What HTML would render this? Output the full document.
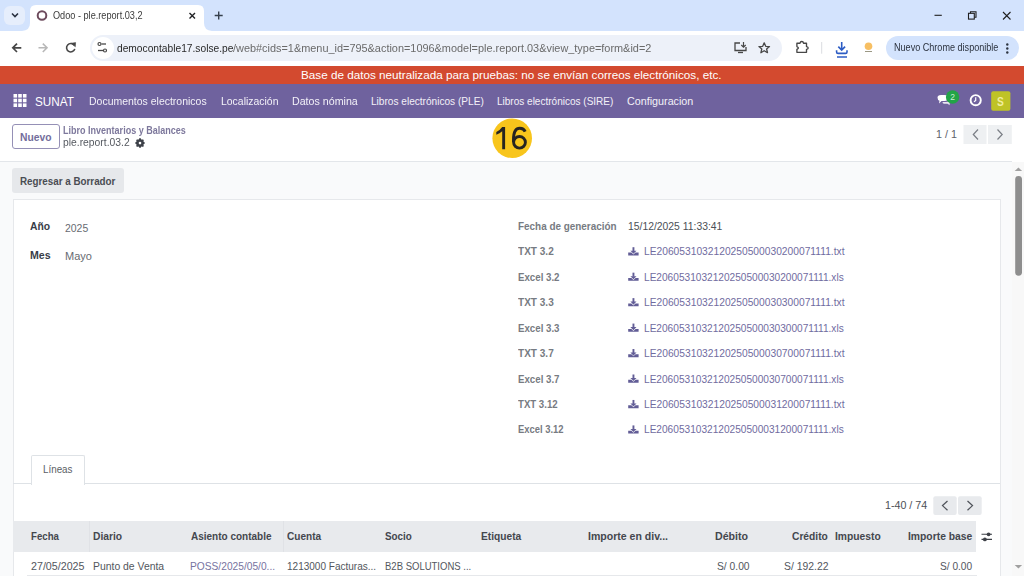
<!DOCTYPE html>
<html><head><meta charset="utf-8">
<style>
*{box-sizing:border-box;margin:0;padding:0}
html,body{width:1024px;height:576px;overflow:hidden;background:#fff;font-family:"Liberation Sans",sans-serif;position:relative}
.b{position:absolute}
.tx{position:absolute;white-space:nowrap;line-height:1}
svg{position:absolute;overflow:visible}
#wrap{position:absolute;left:0;top:0;width:1024px;height:576px;filter:blur(0.35px)}
</style></head><body><div id="wrap">
<!-- chrome tab bar -->
<div class="b" style="left:0;top:0;width:1024px;height:30.5px;background:#d3e3fd"></div>
<div class="b" style="left:4px;top:6px;width:21px;height:19px;border-radius:6px;background:#e6eefc"></div>
<svg style="left:0;top:0" width="1024" height="31">
  <path d="M12 13.5 L15 16.5 L18 13.5" fill="none" stroke="#2a3140" stroke-width="1.6"/>
  <!-- tab shape -->
  <path d="M22 31 Q30 30.5 30 23 L30 11 Q30 5 36 5 L198 5 Q204 5 204 11 L204 23 Q204 30.5 212 31 Z" fill="#fff"/>
  <circle cx="42" cy="15.5" r="4.3" fill="none" stroke="#6d4b5d" stroke-width="2"/>
  <path d="M189.5 13 L195 18.5 M195 13 L189.5 18.5" stroke="#202124" stroke-width="1.4"/>
  <path d="M218.7 11.5 V19.5 M214.7 15.5 H222.7" stroke="#36404d" stroke-width="1.4"/>
  <path d="M934.5 15.3 H941.8" stroke="#1f1f1f" stroke-width="1.1"/>
  <rect x="968.5" y="13.3" width="5.8" height="5.8" fill="none" stroke="#1f1f1f" stroke-width="1.1"/>
  <path d="M970.5 13.3 V11.8 H976 V17.2 H974.3" fill="none" stroke="#1f1f1f" stroke-width="1.1"/>
  <path d="M1003 12 L1010.5 19.5 M1010.5 12 L1003 19.5" stroke="#1f1f1f" stroke-width="1.1"/>
</svg>
<!-- toolbar -->
<div class="b" style="left:0;top:30.5px;width:1024px;height:35.5px;background:#fff;border-top-right-radius:4px"></div>
<div class="b" style="left:90px;top:35px;width:692px;height:25.5px;border-radius:13px;background:#edf1f9"></div>
<div class="b" style="left:91.5px;top:36.5px;width:22.5px;height:22.5px;border-radius:50%;background:#fff"></div>
<div class="b" style="left:885.5px;top:35.5px;width:133.5px;height:24.5px;border-radius:12.5px;background:#d3e3fd"></div>
<svg style="left:0;top:0" width="1024" height="66">
  <!-- back -->
  <path d="M21.3 47.8 H13 M17 43.6 L12.8 47.8 L17 52" fill="none" stroke="#474747" stroke-width="1.7"/>
  <!-- forward -->
  <path d="M38.5 47.8 H46.8 M42.8 43.6 L47 47.8 L42.8 52" fill="none" stroke="#b8b8b8" stroke-width="1.6"/>
  <!-- reload -->
  <path d="M74.2 45.3 A4.2 4.2 0 1 0 74.8 48.9" fill="none" stroke="#474747" stroke-width="1.6"/>
  <path d="M71.6 43.2 L75.6 42.6 L75.3 46.8 Z" fill="#474747" stroke="#474747" stroke-width="0.6" stroke-linejoin="round"/>
  <!-- tune icon -->
  <circle cx="99.5" cy="44" r="1.5" fill="none" stroke="#474747" stroke-width="1.2"/>
  <path d="M101.5 44 H106" stroke="#474747" stroke-width="1.3"/>
  <circle cx="105" cy="50.5" r="1.5" fill="none" stroke="#474747" stroke-width="1.2"/>
  <path d="M98 50.5 H103" stroke="#474747" stroke-width="1.3"/>
  <!-- install -->
  <path d="M740 43 H735 V50.5 H746 V47" fill="none" stroke="#474747" stroke-width="1.3"/>
  <path d="M738 52.5 H743" stroke="#474747" stroke-width="1.3"/>
  <path d="M743.5 42 V47 M741.3 45 L743.5 47.2 L745.7 45" fill="none" stroke="#474747" stroke-width="1.2"/>
  <!-- star -->
  <path d="M764.2 42.8 L765.7 46.3 L769.5 46.6 L766.6 49 L767.5 52.7 L764.2 50.7 L760.9 52.7 L761.8 49 L758.9 46.6 L762.7 46.3 Z" fill="none" stroke="#474747" stroke-width="1.3" stroke-linejoin="round"/>
  <!-- extension -->
  <path d="M796.9 43.2 H800 Q800.3 41.5 801.8 41.5 Q803.3 41.5 803.5 43.2 H806.5 V46.6 Q808.2 46.9 808.2 48 Q808.2 49.1 806.5 49.4 V52.3 H796.9 V49.4 Q798.4 48.6 798.4 48 Q798.4 47.4 796.9 46.6 Z" fill="none" stroke="#474747" stroke-width="1.35" stroke-linejoin="round"/>
  <path d="M821.7 42 V53.7" stroke="#dadce0" stroke-width="1"/>
  <!-- download -->
  <path d="M841.7 42 V50 M838.3 46.6 L841.7 50 L845.1 46.6" fill="none" stroke="#2c5cc4" stroke-width="1.6"/>
  <path d="M836.6 50.3 V52 Q836.6 53.4 838 53.4 H845.6 Q847 53.4 847 52 V50.3" fill="none" stroke="#2c5cc4" stroke-width="1.6"/>
  <path d="M837 57 H847" stroke="#2c5cc4" stroke-width="1.5"/>
  <!-- profile -->
  <circle cx="868.5" cy="46.3" r="3.8" fill="#f7bf63"/>
  <path d="M865 51.5 H872" stroke="#9b9884" stroke-width="1"/>
  <!-- kebab -->
  <circle cx="1007.3" cy="44.5" r="1.2" fill="#2d3440"/>
  <circle cx="1007.3" cy="48.5" r="1.2" fill="#2d3440"/>
  <circle cx="1007.3" cy="52.5" r="1.2" fill="#2d3440"/>
</svg>
<!-- red bar -->
<div class="b" style="left:0;top:66px;width:1024px;height:18px;background:#d34a2f"></div>
<!-- nav -->
<div class="b" style="left:0;top:84px;width:1024px;height:34px;background:#6f629e"></div>
<svg style="left:0;top:0" width="1024" height="120">
  <g fill="#fff">
    <rect x="13.5" y="94" width="3.6" height="3.6"/><rect x="18.2" y="94" width="3.6" height="3.6"/><rect x="22.9" y="94" width="3.6" height="3.6"/>
    <rect x="13.5" y="98.7" width="3.6" height="3.6"/><rect x="18.2" y="98.7" width="3.6" height="3.6"/><rect x="22.9" y="98.7" width="3.6" height="3.6"/>
    <rect x="13.5" y="103.4" width="3.6" height="3.6"/><rect x="18.2" y="103.4" width="3.6" height="3.6"/><rect x="22.9" y="103.4" width="3.6" height="3.6"/>
  </g>
  <!-- chat -->
  <path d="M937.5 97.5 Q937.5 95 941 95 L944.5 95 Q948 95 948 98 Q948 101 944.5 101 L941.5 101 L939 103.5 L939.5 100.8 Q937.5 100.3 937.5 97.5Z" fill="#fff"/>
  <path d="M942.5 102 L946 102 Q949.5 102 949.5 99 L949.5 98 Q951 99 951 101 Q951 103 949.5 103.5 L949.8 105.2 L947.5 103.8 L944 103.8 Q942.5 103.5 942.5 102Z" fill="#e8e4f2"/>
  <circle cx="952.6" cy="97" r="6.7" fill="#22a447"/>
  <!-- clock -->
  <circle cx="975.7" cy="100.2" r="5.1" fill="none" stroke="#fff" stroke-width="1.9"/>
  <path d="M975.7 97.3 V100.5 L974 101.8" fill="none" stroke="#fff" stroke-width="1.2"/>
  <!-- avatar -->
  <rect x="991.2" y="91.2" width="19.2" height="19.5" rx="2" fill="#bfc326"/>
</svg>
<div class="tx" style="left:950.3px;top:92.6px;font-size:8.5px;color:#c8f0d0;font-weight:400">2</div>
<div class="tx" style="left:997.4px;top:96.2px;font-size:12px;font-weight:700;color:#f1eea0;transform:scaleX(0.85);transform-origin:0 0">S</div>
<!-- control panel -->
<div class="b" style="left:0;top:118px;width:1012px;height:43.5px;background:#fff;border-bottom:1px solid #e3e6ea"></div>
<div class="b" style="left:12px;top:124.2px;width:47.8px;height:24.8px;border:1px solid #9590b6;border-radius:3px;background:#fff"></div>
<svg style="left:0;top:0" width="1024" height="160">
  <g transform="translate(140 141.9) scale(0.78)">
    <path fill="#3d4149" d="M-1 -4.6 H1 L1.4 -3.4 L2.6 -2.9 L3.7 -3.5 L5 -2.1 L4.4 -1 L4.9 0.2 L6 0.6 V2.4 L4.9 2.8 L4.4 4 L5 5.1 L3.7 6.4 L2.6 5.8 L1.4 6.3 L1 7.5 H-1 L-1.4 6.3 L-2.6 5.8 L-3.7 6.4 L-5 5.1 L-4.4 4 L-4.9 2.8 L-6 2.4 V0.6 L-4.9 0.2 L-4.4 -1 L-5 -2.1 L-3.7 -3.5 L-2.6 -2.9 L-1.4 -3.4 Z"/>
    <circle cx="0" cy="1.5" r="1.7" fill="#fff"/>
  </g>
  <circle cx="512.2" cy="138.2" r="19.8" fill="#f8c51c"/>
  <path d="M502.2 127 H505.1 V149.3 H502.2 V131.2 Q499.8 133.4 496.3 134.7 V131.9 Q500.3 130 502.2 127 Z" fill="#262421"/>
  <path d="M525.2 131.6 C524.3 129.4 522.4 128.2 519.8 128.2 C515.6 128.2 513.5 131.8 513.5 139.5 V142" fill="none" stroke="#262421" stroke-width="2.9"/>
  <ellipse cx="519.5" cy="142.3" rx="5.9" ry="5.8" fill="none" stroke="#262421" stroke-width="2.9"/>
  <rect x="963.5" y="125" width="23" height="19" fill="#eef0f2"/>
  <rect x="988" y="125" width="23.8" height="19" fill="#eef0f2"/>
  <path d="M978 129.5 L973.3 134.5 L978 139.5" fill="none" stroke="#7a7e85" stroke-width="1.2"/>
  <path d="M997.5 129.5 L1002.2 134.5 L997.5 139.5" fill="none" stroke="#7a7e85" stroke-width="1.2"/>
</svg>
<!-- content bg -->
<div class="b" style="left:0;top:162px;width:1012px;height:414px;background:#f9fafb"></div>
<div class="b" style="left:12.3px;top:168.4px;width:111.5px;height:24.3px;border-radius:3px;background:#e6e8eb"></div>
<div class="b" style="left:12.5px;top:199px;width:988px;height:400px;background:#fff;border:1px solid #e6e8eb"></div>
<!-- tab -->
<div class="b" style="left:13px;top:483px;width:987px;height:1px;background:#dee2e6"></div>
<div class="b" style="left:31.2px;top:454.8px;width:53.5px;height:30px;background:#fff;border:1px solid #dee2e6;border-bottom:none;border-radius:2px 2px 0 0"></div>
<!-- pager -->
<svg style="left:0;top:0" width="1024" height="576">
  <rect x="933.3" y="496.2" width="23.4" height="18.8" rx="2" fill="#e8eaed"/>
  <rect x="958" y="496.2" width="23.7" height="18.8" rx="2" fill="#e8eaed"/>
  <path d="M947.5 501 L942.5 505.6 L947.5 510.2" fill="none" stroke="#50545b" stroke-width="1.25"/>
  <path d="M967.5 501 L972.5 505.6 L967.5 510.2" fill="none" stroke="#50545b" stroke-width="1.25"/>
  <!-- download icons -->
  <g id="dl">
  </g>
</svg>
<!-- table header -->
<div class="b" style="left:13px;top:521px;width:963px;height:31px;background:#e8eaed"></div>
<div class="b" style="left:89.3px;top:521px;width:1px;height:31px;background:#e0e2e6"></div>
<div class="b" style="left:283.3px;top:521px;width:1px;height:31px;background:#e0e2e6"></div>
<div class="b" style="left:27px;top:574.5px;width:950px;height:1px;background:#e6e8eb"></div>
<svg style="left:0;top:0" width="1024" height="576">
  <path d="M981.5 534.3 H992 M981.5 539.4 H992" stroke="#3d4047" stroke-width="1.1"/>
  <circle cx="988.6" cy="534.3" r="1.9" fill="#3d4047"/><circle cx="984.9" cy="539.4" r="1.9" fill="#3d4047"/>
</svg>
<!-- scrollbar -->
<div class="b" style="left:1012px;top:162px;width:12px;height:414px;background:#f8f8f8"></div>
<svg style="left:0;top:0" width="1024" height="576">
  <path d="M1014.6 171 L1018.4 167.6 L1022.1 171 Z" fill="#a0a0a0"/>
  <rect x="1015.2" y="176" width="6.8" height="99.7" rx="3.4" fill="#8e8e8e"/>
  <path d="M1014.6 565 L1018.4 568.4 L1022.1 565 Z" fill="#a0a0a0"/>
</svg>
<div class="tx" style="left:53.43px;top:10.19px;font-size:11px;font-weight:400;color:#3c3c3c;transform:scaleX(0.8318);transform-origin:0 0;">Odoo - ple.report.03,2</div>
<div class="tx" style="left:117.23px;top:42.69px;font-size:11px;font-weight:400;color:#2a2a2a;transform:scaleX(0.9286);transform-origin:0 0;">democontable17.solse.pe</div>
<div class="tx" style="left:232.83px;top:42.69px;font-size:11px;font-weight:400;color:#6a6a6a;transform:scaleX(0.9914);transform-origin:0 0;">/web#cids=1&amp;menu_id=795&amp;action=1096&amp;model=ple.report.03&amp;view_type=form&amp;id=2</div>
<div class="tx" style="left:894.03px;top:41.69px;font-size:11px;font-weight:400;color:#2d3440;transform:scaleX(0.8249);transform-origin:0 0;">Nuevo Chrome disponible</div>
<div class="tx" style="left:301.49px;top:69.48px;font-size:11.6px;font-weight:400;color:#fff;transform:scaleX(1.0084);transform-origin:0 0;">Base de datos neutralizada para pruebas: no se envían correos electrónicos, etc.</div>
<div class="tx" style="left:34.99px;top:95.09px;font-size:13px;font-weight:400;color:#fff;transform:scaleX(0.9014);transform-origin:0 0;">SUNAT</div>
<div class="tx" style="left:89.02px;top:95.62px;font-size:11.2px;font-weight:400;color:#f3f1f8;transform:scaleX(0.9366);transform-origin:0 0;">Documentos electronicos</div>
<div class="tx" style="left:220.72px;top:95.62px;font-size:11.2px;font-weight:400;color:#f3f1f8;transform:scaleX(0.9329);transform-origin:0 0;">Localización</div>
<div class="tx" style="left:291.52px;top:95.62px;font-size:11.2px;font-weight:400;color:#f3f1f8;transform:scaleX(0.9524);transform-origin:0 0;">Datos nómina</div>
<div class="tx" style="left:370.82px;top:95.62px;font-size:11.2px;font-weight:400;color:#f3f1f8;transform:scaleX(0.9021);transform-origin:0 0;">Libros electrónicos (PLE)</div>
<div class="tx" style="left:497.22px;top:95.62px;font-size:11.2px;font-weight:400;color:#f3f1f8;transform:scaleX(0.8953);transform-origin:0 0;">Libros electrónicos (SIRE)</div>
<div class="tx" style="left:627.22px;top:95.62px;font-size:11.2px;font-weight:400;color:#f3f1f8;transform:scaleX(0.9609);transform-origin:0 0;">Configuracion</div>
<div class="tx" style="left:20.14px;top:131.86px;font-size:10.8px;font-weight:700;color:#736d9c;transform:scaleX(0.9544);transform-origin:0 0;">Nuevo</div>
<div class="tx" style="left:63.30px;top:125.73px;font-size:10px;font-weight:700;color:#7d789c;transform:scaleX(0.9018);transform-origin:0 0;">Libro Inventarios y Balances</div>
<div class="tx" style="left:63.20px;top:137.46px;font-size:11.5px;font-weight:400;color:#555960;transform:scaleX(0.8990);transform-origin:0 0;">ple.report.03.2</div>
<div class="tx" style="left:936.03px;top:129.49px;font-size:11px;font-weight:400;color:#5d6168;transform:scaleX(0.9773);transform-origin:0 0;">1 / 1</div>
<div class="tx" style="left:19.74px;top:175.66px;font-size:10.8px;font-weight:700;color:#4a4d53;transform:scaleX(0.9084);transform-origin:0 0;">Regresar a Borrador</div>
<div class="tx" style="left:30.13px;top:220.99px;font-size:11px;font-weight:700;color:#383c47;transform:scaleX(0.9406);transform-origin:0 0;">Año</div>
<div class="tx" style="left:65.03px;top:222.69px;font-size:11px;font-weight:400;color:#676b72;transform:scaleX(0.9484);transform-origin:0 0;">2025</div>
<div class="tx" style="left:30.13px;top:249.69px;font-size:11px;font-weight:700;color:#383c47;transform:scaleX(0.9633);transform-origin:0 0;">Mes</div>
<div class="tx" style="left:65.03px;top:251.19px;font-size:11px;font-weight:400;color:#676b72;transform:scaleX(1.0005);transform-origin:0 0;">Mayo</div>
<div class="tx" style="left:517.83px;top:220.69px;font-size:11px;font-weight:700;color:#777b82;transform:scaleX(0.9012);transform-origin:0 0;">Fecha de generación</div>
<div class="tx" style="left:628.43px;top:220.69px;font-size:11px;font-weight:400;color:#4b4f56;transform:scaleX(0.9420);transform-origin:0 0;">15/12/2025 11:33:41</div>
<div class="tx" style="left:517.83px;top:246.29px;font-size:11px;font-weight:700;color:#777b82;transform:scaleX(0.9130);transform-origin:0 0;">TXT 3.2</div>
<div class="tx" style="left:643.84px;top:246.26px;font-size:10.8px;font-weight:400;color:#706ba0;transform:scaleX(0.9486);transform-origin:0 0;">LE2060531032120250500030200071111.txt</div>
<div class="tx" style="left:517.83px;top:271.74px;font-size:11px;font-weight:700;color:#777b82;transform:scaleX(0.8816);transform-origin:0 0;">Excel 3.2</div>
<div class="tx" style="left:643.84px;top:271.71px;font-size:10.8px;font-weight:400;color:#706ba0;transform:scaleX(0.9369);transform-origin:0 0;">LE2060531032120250500030200071111.xls</div>
<div class="tx" style="left:517.83px;top:297.19px;font-size:11px;font-weight:700;color:#777b82;transform:scaleX(0.9130);transform-origin:0 0;">TXT 3.3</div>
<div class="tx" style="left:643.84px;top:297.16px;font-size:10.8px;font-weight:400;color:#706ba0;transform:scaleX(0.9486);transform-origin:0 0;">LE2060531032120250500030300071111.txt</div>
<div class="tx" style="left:517.83px;top:322.64px;font-size:11px;font-weight:700;color:#777b82;transform:scaleX(0.8816);transform-origin:0 0;">Excel 3.3</div>
<div class="tx" style="left:643.84px;top:322.61px;font-size:10.8px;font-weight:400;color:#706ba0;transform:scaleX(0.9369);transform-origin:0 0;">LE2060531032120250500030300071111.xls</div>
<div class="tx" style="left:517.83px;top:348.09px;font-size:11px;font-weight:700;color:#777b82;transform:scaleX(0.9130);transform-origin:0 0;">TXT 3.7</div>
<div class="tx" style="left:643.84px;top:348.06px;font-size:10.8px;font-weight:400;color:#706ba0;transform:scaleX(0.9486);transform-origin:0 0;">LE2060531032120250500030700071111.txt</div>
<div class="tx" style="left:517.83px;top:373.54px;font-size:11px;font-weight:700;color:#777b82;transform:scaleX(0.8816);transform-origin:0 0;">Excel 3.7</div>
<div class="tx" style="left:643.84px;top:373.51px;font-size:10.8px;font-weight:400;color:#706ba0;transform:scaleX(0.9369);transform-origin:0 0;">LE2060531032120250500030700071111.xls</div>
<div class="tx" style="left:517.83px;top:398.99px;font-size:11px;font-weight:700;color:#777b82;transform:scaleX(0.8756);transform-origin:0 0;">TXT 3.12</div>
<div class="tx" style="left:643.84px;top:398.96px;font-size:10.8px;font-weight:400;color:#706ba0;transform:scaleX(0.9486);transform-origin:0 0;">LE2060531032120250500031200071111.txt</div>
<div class="tx" style="left:517.83px;top:424.44px;font-size:11px;font-weight:700;color:#777b82;transform:scaleX(0.8572);transform-origin:0 0;">Excel 3.12</div>
<div class="tx" style="left:643.84px;top:424.41px;font-size:10.8px;font-weight:400;color:#706ba0;transform:scaleX(0.9369);transform-origin:0 0;">LE2060531032120250500031200071111.xls</div>
<div class="tx" style="left:42.98px;top:464.29px;font-size:11px;font-weight:400;color:#5a5e65;transform:scaleX(0.8922);transform-origin:0 0;">Líneas</div>
<div class="tx" style="left:885.06px;top:500.31px;font-size:10.5px;font-weight:400;color:#4b4f56;transform:scaleX(1.0171);transform-origin:0 0;">1-40 / 74</div>
<div class="tx" style="left:31.34px;top:530.86px;font-size:10.8px;font-weight:700;color:#44474e;transform:scaleX(0.8936);transform-origin:0 0;">Fecha</div>
<div class="tx" style="left:93.34px;top:530.86px;font-size:10.8px;font-weight:700;color:#44474e;transform:scaleX(0.9506);transform-origin:0 0;">Diario</div>
<div class="tx" style="left:190.54px;top:530.86px;font-size:10.8px;font-weight:700;color:#44474e;transform:scaleX(0.9252);transform-origin:0 0;">Asiento contable</div>
<div class="tx" style="left:287.44px;top:530.86px;font-size:10.8px;font-weight:700;color:#44474e;transform:scaleX(0.9317);transform-origin:0 0;">Cuenta</div>
<div class="tx" style="left:384.74px;top:530.86px;font-size:10.8px;font-weight:700;color:#44474e;transform:scaleX(0.9112);transform-origin:0 0;">Socio</div>
<div class="tx" style="left:481.44px;top:530.86px;font-size:10.8px;font-weight:700;color:#44474e;transform:scaleX(0.9437);transform-origin:0 0;">Etiqueta</div>
<div class="tx" style="left:587.99px;top:530.86px;font-size:10.8px;font-weight:700;color:#44474e;transform:scaleX(0.9762);transform-origin:0 0;">Importe en div...</div>
<div class="tx" style="left:715.24px;top:530.86px;font-size:10.8px;font-weight:700;color:#44474e;transform:scaleX(0.9852);transform-origin:0 0;">Débito</div>
<div class="tx" style="left:792.24px;top:530.86px;font-size:10.8px;font-weight:700;color:#44474e;transform:scaleX(0.9471);transform-origin:0 0;">Crédito</div>
<div class="tx" style="left:834.84px;top:530.86px;font-size:10.8px;font-weight:700;color:#44474e;transform:scaleX(0.9520);transform-origin:0 0;">Impuesto</div>
<div class="tx" style="left:907.54px;top:530.86px;font-size:10.8px;font-weight:700;color:#44474e;transform:scaleX(0.9567);transform-origin:0 0;">Importe base</div>
<div class="tx" style="left:31.23px;top:560.89px;font-size:11px;font-weight:400;color:#52565d;transform:scaleX(0.9720);transform-origin:0 0;">27/05/2025</div>
<div class="tx" style="left:93.23px;top:560.89px;font-size:11px;font-weight:400;color:#52565d;transform:scaleX(0.9453);transform-origin:0 0;">Punto de Venta</div>
<div class="tx" style="left:190.23px;top:560.89px;font-size:11px;font-weight:400;color:#77739f;transform:scaleX(0.9279);transform-origin:0 0;">POSS/2025/05/0...</div>
<div class="tx" style="left:287.23px;top:560.89px;font-size:11px;font-weight:400;color:#52565d;transform:scaleX(0.9108);transform-origin:0 0;">1213000 Facturas...</div>
<div class="tx" style="left:384.73px;top:560.89px;font-size:11px;font-weight:400;color:#52565d;transform:scaleX(0.8653);transform-origin:0 0;">B2B SOLUTIONS ...</div>
<div class="tx" style="left:716.73px;top:560.89px;font-size:11px;font-weight:400;color:#52565d;transform:scaleX(0.9343);transform-origin:0 0;">S/ 0.00</div>
<div class="tx" style="left:783.93px;top:560.89px;font-size:11px;font-weight:400;color:#52565d;transform:scaleX(0.9432);transform-origin:0 0;">S/ 192.22</div>
<div class="tx" style="left:939.73px;top:560.89px;font-size:11px;font-weight:400;color:#52565d;transform:scaleX(0.9214);transform-origin:0 0;">S/ 0.00</div>
<svg style="left:0;top:0" width="1024" height="576"><g transform="translate(628.2 247.20)" fill="#625d96"><rect x="4.3" y="0" width="1.9" height="4"/><path d="M2.2 3.5 H8.3 L5.25 6.6 Z"/><path d="M0 5.3 H3.2 L5.25 7.3 L7.3 5.3 H10.4 V8.2 H0 Z"/></g><g transform="translate(628.2 272.66)" fill="#625d96"><rect x="4.3" y="0" width="1.9" height="4"/><path d="M2.2 3.5 H8.3 L5.25 6.6 Z"/><path d="M0 5.3 H3.2 L5.25 7.3 L7.3 5.3 H10.4 V8.2 H0 Z"/></g><g transform="translate(628.2 298.12)" fill="#625d96"><rect x="4.3" y="0" width="1.9" height="4"/><path d="M2.2 3.5 H8.3 L5.25 6.6 Z"/><path d="M0 5.3 H3.2 L5.25 7.3 L7.3 5.3 H10.4 V8.2 H0 Z"/></g><g transform="translate(628.2 323.58)" fill="#625d96"><rect x="4.3" y="0" width="1.9" height="4"/><path d="M2.2 3.5 H8.3 L5.25 6.6 Z"/><path d="M0 5.3 H3.2 L5.25 7.3 L7.3 5.3 H10.4 V8.2 H0 Z"/></g><g transform="translate(628.2 349.04)" fill="#625d96"><rect x="4.3" y="0" width="1.9" height="4"/><path d="M2.2 3.5 H8.3 L5.25 6.6 Z"/><path d="M0 5.3 H3.2 L5.25 7.3 L7.3 5.3 H10.4 V8.2 H0 Z"/></g><g transform="translate(628.2 374.50)" fill="#625d96"><rect x="4.3" y="0" width="1.9" height="4"/><path d="M2.2 3.5 H8.3 L5.25 6.6 Z"/><path d="M0 5.3 H3.2 L5.25 7.3 L7.3 5.3 H10.4 V8.2 H0 Z"/></g><g transform="translate(628.2 399.96)" fill="#625d96"><rect x="4.3" y="0" width="1.9" height="4"/><path d="M2.2 3.5 H8.3 L5.25 6.6 Z"/><path d="M0 5.3 H3.2 L5.25 7.3 L7.3 5.3 H10.4 V8.2 H0 Z"/></g><g transform="translate(628.2 425.42)" fill="#625d96"><rect x="4.3" y="0" width="1.9" height="4"/><path d="M2.2 3.5 H8.3 L5.25 6.6 Z"/><path d="M0 5.3 H3.2 L5.25 7.3 L7.3 5.3 H10.4 V8.2 H0 Z"/></g></svg>
</div></body></html>
